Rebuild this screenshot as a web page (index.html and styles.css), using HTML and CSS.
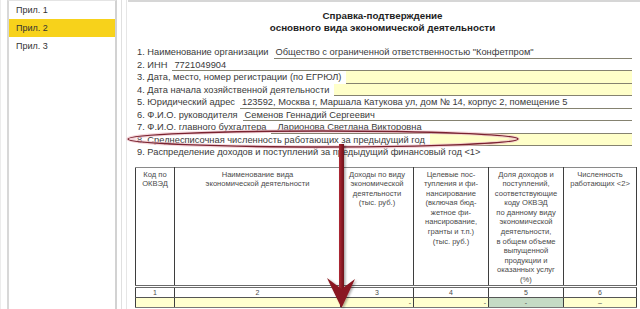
FILE: index.html
```html
<!DOCTYPE html>
<html lang="ru">
  <head>
    <meta charset="UTF-8" />
    <meta name="viewport" content="width=device-width, initial-scale=1.0" />
    <title>Справка-подтверждение ОВЭД</title>
    <link rel="stylesheet" href="styles.css">
  </head>
  <body>
    <div class="page">
      <aside class="sidebar">
        <ul class="tabs">
          <li>Прил. 1</li>
          <li class="active">Прил. 2</li>
          <li>Прил. 3</li>
        </ul>
        <div class="splitter"></div>
      </aside>

      <main class="doc">
        <h1 class="title">Справка-подтверждение<br />основного вида экономической деятельности</h1>

        <div class="field">
          <span class="label">1. Наименование организации</span>
          <span class="value">Общество с ограниченной ответственностью "Конфетпром"</span>
        </div>
        <div class="field">
          <span class="label">2. ИНН</span>
          <span class="value">7721049904</span>
        </div>
        <div class="field">
          <span class="label">3. Дата, место, номер регистрации (по ЕГРЮЛ)</span>
          <span class="value fill"></span>
        </div>
        <div class="field">
          <span class="label">4. Дата начала хозяйственной деятельности</span>
          <span class="value fill"></span>
        </div>
        <div class="field">
          <span class="label">5. Юридический адрес</span>
          <span class="value">123592, Москва г, Маршала Катукова ул, дом № 14, корпус 2, помещение 5</span>
        </div>
        <div class="field">
          <span class="label">6. Ф.И.О. руководителя</span>
          <span class="value">Семенов Геннадий Сергеевич</span>
        </div>
        <div class="field">
          <span class="label">7. Ф.И.О. главного бухгалтера</span>
          <span class="value wide">Ларионова Светлана Викторовна</span>
        </div>
        <div class="field">
          <span class="label">8. Среднесписочная численность работающих за предыдущий год</span>
          <span class="value fill"></span>
        </div>
        <div class="field">
          <span class="label">9. Распределение доходов и поступлений за предыдущий финансовый год &lt;1&gt;</span>
        </div>

        <table class="grid">
          <colgroup>
            <col class="c1" />
            <col class="c2" />
            <col class="c3" />
            <col class="c4" />
            <col class="c5" />
            <col class="c6" />
          </colgroup>
          <tr class="head">
            <td><div>Код по<br />ОКВЭД</div></td>
            <td><div>Наименование вида<br />экономической деятельности</div></td>
            <td><div>Доходы по виду<br />экономической<br />деятельности<br />(тыс. руб.)</div></td>
            <td><div>Целевые пос-<br />тупления и фи-<br />нансирование<br />(включая бюд-<br />жетное фи-<br />нансирование,<br />гранты и т.п.)<br />(тыс. руб.)</div></td>
            <td><div>Доля доходов и<br />поступлений,<br />соответствующие<br />коду ОКВЭД<br />по данному виду<br />экономической<br />деятельности,<br />в общем объеме<br />выпущенной<br />продукции и<br />оказанных услуг<br />(%)</div></td>
            <td><div>Численность<br />работающих &lt;2&gt;</div></td>
          </tr>
          <tr class="nums">
            <td>1</td><td>2</td><td>3</td><td>4</td><td>5</td><td>6</td>
          </tr>
          <tr class="data">
            <td></td>
            <td></td>
            <td class="right">-</td>
            <td class="right">-</td>
            <td class="green">-</td>
            <td>–</td>
          </tr>
        </table>
      </main>
    </div>

    <svg class="marks" width="640" height="309" viewBox="0 0 640 309">
      <defs>
        <linearGradient id="shaft" x1="0" x2="1" y1="0" y2="0">
          <stop offset="0" stop-color="#b02a35" />
          <stop offset="1" stop-color="#6e1018" />
        </linearGradient>
        <filter id="soft" x="-20%" y="-20%" width="140%" height="140%">
          <feDropShadow dx="1.5" dy="1" stdDeviation="1.2" flood-color="#000" flood-opacity="0.35" />
        </filter>
      </defs>
      <ellipse cx="323" cy="139" rx="195" ry="8" fill="none" stroke="#f0c4cc" stroke-width="3.5" opacity="0.7" />
      <ellipse cx="323" cy="139" rx="195" ry="8" fill="none" stroke="#7a2230" stroke-width="1.4" />
      <g filter="url(#soft)">
        <rect x="339" y="144" width="5" height="146" fill="url(#shaft)" />
        <path d="M327 278 L341.5 308 L355 279 L341.5 289 Z" fill="#8a1620" />
      </g>
    </svg>
  </body>
</html>
```

FILE: styles.css
```css
* {
  padding: 0;
  margin: 0;
  box-sizing: border-box;
}
body {
  background-color: white;
  font-family: "Liberation Sans", Arial, sans-serif;
  color: #3a3a3a;
  overflow: hidden;
}
.page {
  display: flex;
  width: 640px;
  height: 309px;
}

.sidebar {
  display: flex;
  width: 128px;
  height: 100%;
  border-left: 1px solid #ececec;
  padding-left: 6px;
}
.tabs {
  list-style: none;
  width: 110px;
  height: 100%;
  border-left: 2px solid #d8d8d8;
  border-right: 2px solid #d2d2d2;
  border-top: 1px solid #e4e4e4;
}
.tabs li {
  height: 18px;
  line-height: 18px;
  padding-left: 7px;
  font-size: 9px;
  color: #333;
}
.tabs li.active {
  background-color: #f7d21b;
}
.splitter {
  width: 6px;
  height: 100%;
  margin-left: 4px;
  border-left: 1px solid #e0e0e0;
  border-right: 1px solid #e6e6e6;
}

.doc {
  flex: 1;
  border-top: 2px solid #d6d6d6;
  padding: 8px 0 0 7px;
}
.title {
  font-size: 9.8px;
  line-height: 12px;
  font-weight: bold;
  text-align: center;
  color: #1e1e1e;
  margin-bottom: 12px;
  padding-right: 10px;
}

.field {
  display: flex;
  height: 12.5px;
  line-height: 12px;
  font-size: 9.3px;
  padding-left: 2px;
  margin-right: 8px;
  white-space: nowrap;
}
.value {
  flex: 1;
  margin-left: 5px;
  padding-left: 2px;
  border-bottom: 1px solid #858270;
}
.value.wide {
  padding-left: 6px;
}
.value.fill {
  background-color: #ffffc9;
}

.grid {
  border-collapse: collapse;
  table-layout: fixed;
  width: 501px;
  margin-top: 8px;
  font-size: 7.6px;
  color: #4a4a4a;
}
.c1 { width: 39px; }
.c2 { width: 166px; }
.c3 { width: 73px; }
.c4 { width: 75px; }
.c5 { width: 75px; }
.c6 { width: 73px; }
.grid td {
  border-left: 1px solid #3e3e3e;
  border-right: 1px solid #3e3e3e;
  text-align: center;
  padding: 0;
}
.head td {
  height: 119px;
  vertical-align: top;
  border-top: 1px solid #8a8a8a;
  border-bottom: 3px double #6a6a6a;
}
.head td div {
  height: 116px;
  padding-top: 2px;
  line-height: 9.6px;
}
.nums td {
  height: 10px;
  line-height: 9px;
  font-size: 7px;
  border-bottom: 1px solid #555;
}
.data td {
  height: 10px;
  line-height: 9px;
  font-size: 7px;
  background-color: #ffffcf;
  border-bottom: 1px solid #777;
}
.data td.right {
  text-align: right;
  padding-right: 2px;
}
.data td.green {
  background-color: #c5dbc5;
}

.marks {
  position: absolute;
  left: 0;
  top: 0;
  pointer-events: none;
}
```
